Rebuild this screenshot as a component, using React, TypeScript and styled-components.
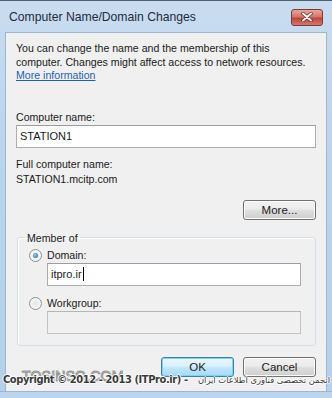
import styled, { createGlobalStyle } from 'styled-components';

const GlobalStyle = createGlobalStyle`
  html, body {
    margin: 0;
    padding: 0;
    background: #bcd3ec;
  }
  body {
    font-family: "Liberation Sans", Arial, sans-serif;
  }
`;

const Window = styled.div`
  position: relative;
  width: 332px;
  height: 398px;
  box-sizing: border-box;
  display: flex;
  flex-direction: column;
  border-top: 1px solid #4d6079;
  background: linear-gradient(180deg, #c9dcf0 0%, #bcd3ec 40%, #b7d0ea 100%);
  overflow: hidden;
`;

const TitleBar = styled.div`
  height: 31px;
  display: flex;
  align-items: center;
  justify-content: space-between;
  padding: 0 9px 0 9px;
  box-sizing: border-box;
`;

const Title = styled.span`
  font-size: 12.2px;
  color: #1e2c3d;
`;

const CloseButton = styled.div`
  width: 30px;
  height: 15px;
  border: 1px solid #7a3a38;
  border-radius: 3px;
  background: linear-gradient(180deg, #e6a59c 0%, #d5756a 45%, #c0453a 55%, #d27a6e 100%);
  display: flex;
  align-items: center;
  justify-content: center;
  margin-top: 1px;
`;

const Panel = styled.div`
  flex: 1;
  margin: 0 5px;
  background: #f0f0f0;
  border: 1px solid #9fb6cf;
  border-bottom: none;
  padding: 9px 10px 0 10px;
  box-sizing: border-box;
  display: flex;
  flex-direction: column;
  color: #1a1a1a;
  font-size: 10.6px;
`;

const BottomEdge = styled.div`
  height: 6px;
  border-top: 1px solid #9fb6cf;
  background: #bcd4ec;
`;

const Intro = styled.p`
  margin: 0;
  line-height: 13.5px;
  white-space: nowrap;
`;

const Link = styled.a`
  color: #1f5fb0;
  text-decoration: underline;
`;

const FieldLabel = styled.div<{ $top?: number }>`
  margin-top: ${p => p.$top ?? 0}px;
  line-height: 15px;
`;

const TextBox = styled.div<{ $disabled?: boolean; $width?: string }>`
  height: 23px;
  width: ${p => p.$width || '100%'};
  box-sizing: border-box;
  border: 1px solid ${p => (p.$disabled ? '#c3c3c3' : '#abadb3')};
  border-top-color: ${p => (p.$disabled ? '#b5b5b5' : '#9a9da4')};
  background: ${p => (p.$disabled ? '#f0f0f0' : '#ffffff')};
  display: flex;
  align-items: center;
  padding-left: 3px;
  font-size: 11px;
`;

const Caret = styled.span`
  display: inline-block;
  width: 1px;
  height: 14px;
  background: #000;
  margin-left: 1px;
`;

const ButtonRow = styled.div<{ $top: number }>`
  display: flex;
  justify-content: flex-end;
  gap: 9px;
  margin-top: ${p => p.$top}px;
`;

const Button = styled.div<{ $default?: boolean }>`
  width: 73px;
  height: 20px;
  box-sizing: border-box;
  border: 1px solid ${p => (p.$default ? '#3c7fb1' : '#707070')};
  border-radius: 3px;
  background: ${p =>
    p.$default
      ? 'linear-gradient(180deg, #eaf6fd 0%, #d9f0fc 45%, #bee6fd 55%, #a7d9f5 100%)'
      : 'linear-gradient(180deg, #f2f2f2 0%, #ebebeb 45%, #dddddd 55%, #cfcfcf 100%)'};
  box-shadow: ${p => (p.$default ? 'inset 0 0 0 1px #7ed4f0' : 'inset 0 0 0 1px #fcfcfc')};
  display: flex;
  align-items: center;
  justify-content: center;
  font-size: 11.5px;
  color: #1a1a1a;
`;

const GroupBox = styled.fieldset`
  margin: 12px 0 0 1px;
  padding: 3px 11px 11px 11px;
  border: 1px solid #d5dfe5;
  border-radius: 3px;
  box-shadow: inset 1px 1px 0 #fff;
  display: flex;
  flex-direction: column;
  min-width: 0;
  width: 299px;
  box-sizing: border-box;
`;

const Legend = styled.legend`
  padding: 0 2px;
  margin-left: -4px;
  font-size: 10.6px;
`;

const RadioRow = styled.label<{ $top?: number }>`
  display: flex;
  align-items: center;
  gap: 5px;
  margin-top: ${p => p.$top ?? 0}px;
  height: 15px;
`;

const Radio = styled.span<{ $checked?: boolean }>`
  width: 11px;
  height: 11px;
  border-radius: 50%;
  border: 1px solid #8e8f8f;
  background: radial-gradient(circle, #e4e4e4 0%, #f7f7f7 70%);
  display: flex;
  align-items: center;
  justify-content: center;
  &::after {
    content: '';
    display: ${p => (p.$checked ? 'block' : 'none')};
    width: 5px;
    height: 5px;
    border-radius: 50%;
    background: radial-gradient(circle at 40% 40%, #8ad0f5, #1d5f95);
  }
`;

const Indented = styled.div`
  padding-left: 18px;
`;

const Watermark = styled.div`
  position: absolute;
  left: 0;
  right: 0;
  bottom: 8px;
  height: 22px;
  pointer-events: none;
`;

const BrandMark = styled.div`
  position: absolute;
  left: 22px;
  top: 0;
  font-size: 14px;
  letter-spacing: 0.2px;
  color: rgba(235, 235, 235, 0.6);
  -webkit-text-stroke: 1px rgba(110, 110, 110, 0.7);
`;

const Copyright = styled.div`
  position: absolute;
  left: 3px;
  right: 2px;
  top: 5px;
  font-size: 11px;
  font-weight: bold;
  color: #3a3a3a;
  white-space: nowrap;
  text-shadow: 1px 0 0 #fff, -1px 0 0 #fff, 0 1px 0 #fff, 0 -1px 0 #fff;
  font-family: "DejaVu Sans Condensed", "DejaVu Sans", sans-serif;
  letter-spacing: -0.4px;
  display: flex;
  justify-content: space-between;
  align-items: baseline;
`;

const Persian = styled.span`
  font-size: 8.4px;
  font-weight: normal;
  letter-spacing: 0;
  font-family: "DejaVu Sans", sans-serif;
  direction: rtl;
`;

function CloseGlyph() {
  return (
    <svg width="12" height="10" viewBox="0 0 12 10">
      <path
        d="M2 1.5 L10 8.5 M10 1.5 L2 8.5"
        stroke="#6b2a26"
        strokeWidth="3.4"
        strokeLinecap="round"
      />
      <path
        d="M2 1.5 L10 8.5 M10 1.5 L2 8.5"
        stroke="#ffffff"
        strokeWidth="2"
        strokeLinecap="round"
      />
    </svg>
  );
}

export default function App() {
  return (
    <>
      <GlobalStyle />
      <Window>
        <TitleBar>
          <Title>Computer Name/Domain Changes</Title>
          <CloseButton>
            <CloseGlyph />
          </CloseButton>
        </TitleBar>
        <Panel>
          <Intro>
            You can change the name and the membership of this
            <br />
            computer. Changes might affect access to network resources.
            <br />
            <Link>More information</Link>
          </Intro>

          <FieldLabel $top={27}>Computer name:</FieldLabel>
          <TextBox>STATION1</TextBox>

          <FieldLabel $top={9}>Full computer name:</FieldLabel>
          <FieldLabel>STATION1.mcitp.com</FieldLabel>

          <ButtonRow $top={13}>
            <Button>More...</Button>
          </ButtonRow>

          <GroupBox>
            <Legend>Member of</Legend>
            <RadioRow $top={1}>
              <Radio $checked />
              Domain:
            </RadioRow>
            <Indented>
              <TextBox $width="254px">
                itpro.ir
                <Caret />
              </TextBox>
            </Indented>
            <RadioRow $top={10}>
              <Radio />
              Workgroup:
            </RadioRow>
            <Indented>
              <TextBox $width="254px" $disabled />
            </Indented>
          </GroupBox>

          <ButtonRow $top={11}>
            <Button $default>OK</Button>
            <Button>Cancel</Button>
          </ButtonRow>
        </Panel>
        <BottomEdge />
        <Watermark>
          <BrandMark>TOSINSO.COM</BrandMark>
          <Copyright>
            <span>Copyright © 2012 - 2013 (ITPro.ir) -</span>
            <Persian>انجمن تخصصی فناوری اطلاعات ایران</Persian>
          </Copyright>
        </Watermark>
      </Window>
    </>
  );
}
